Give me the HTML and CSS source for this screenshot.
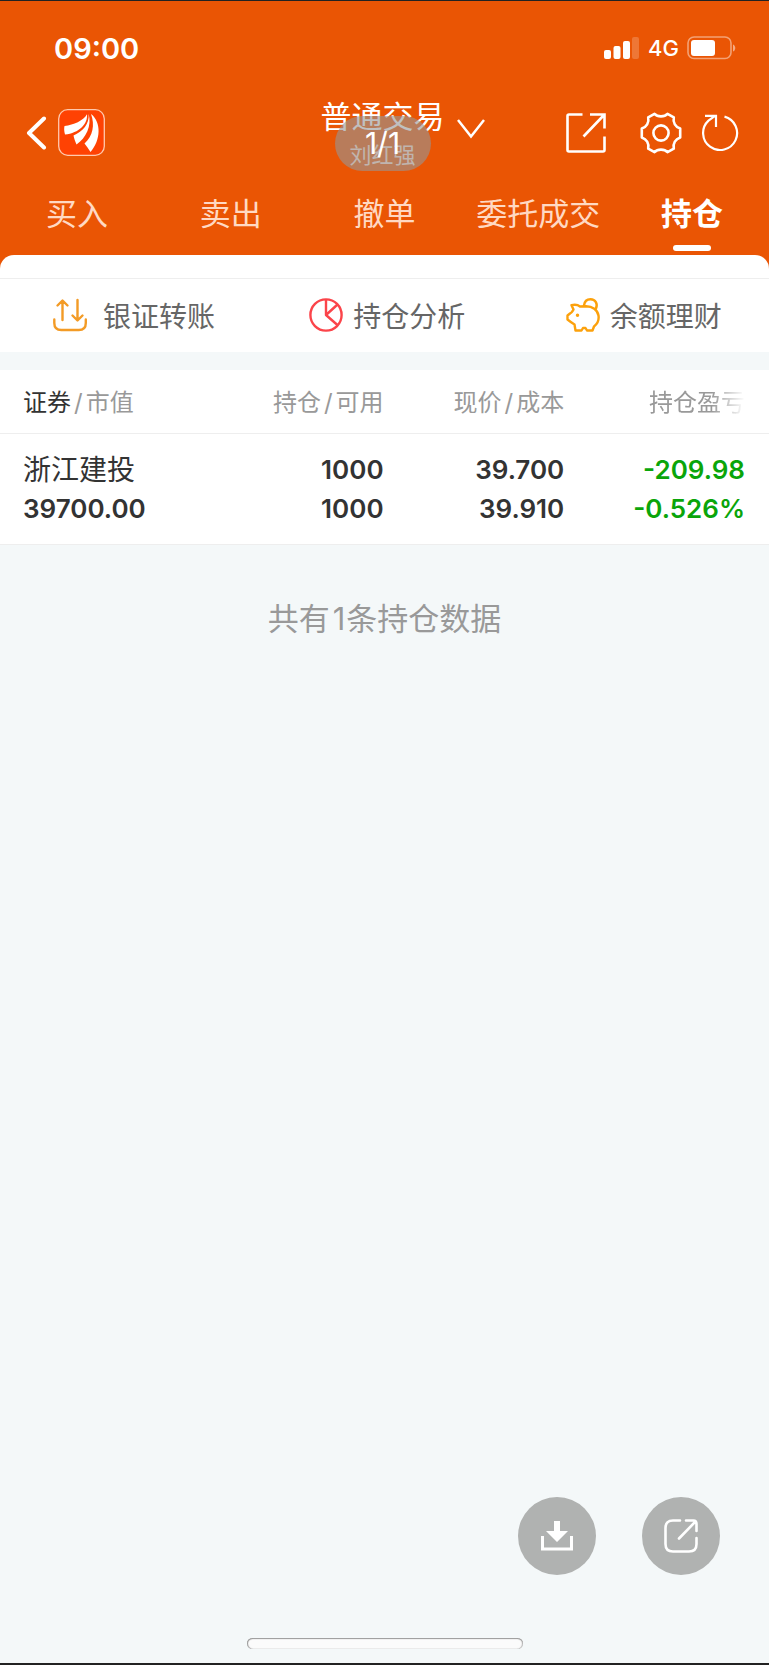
FILE: index.html
```html
<!DOCTYPE html>
<html lang="zh-CN">
<head>
  <meta charset="UTF-8" />
  <meta name="viewport" content="width=device-width, initial-scale=1.0" />
  <title>持仓</title>
  <link rel="stylesheet" href="styles.css">
</head>
<body>
  <header class="header">
    <div class="status">
      <span class="time">09:00</span>
      <div class="status-right">
        <svg width="36" height="22" viewBox="0 0 36 22" fill="#fff">
          <rect x="0" y="13" width="7" height="9" rx="2"/>
          <rect x="9.5" y="9" width="7" height="13" rx="2"/>
          <rect x="19" y="4" width="7" height="18" rx="2"/>
          <rect x="28" y="0" width="7" height="22" rx="2" opacity=".2"/>
        </svg>
        <span class="network">4G</span>
        <svg width="50" height="24" viewBox="0 0 50 24">
          <rect x="1" y="1" width="43" height="21.5" rx="6" fill="none" stroke="#fff" stroke-width="1.6" opacity=".45"/>
          <rect x="4" y="4" width="24" height="16" rx="3" fill="#fff"/>
          <path d="M46 8.5c3 1 3 6 0 7z" fill="#fff" opacity=".5"/>
        </svg>
      </div>
    </div>

    <nav class="nav">
      <div class="nav-left">
        <button class="icon-btn" aria-label="返回">
          <svg width="21" height="34" viewBox="0 0 21 34" fill="none" stroke="#fff" stroke-width="4" stroke-linecap="round" stroke-linejoin="round"><path d="M18 2.500 3 17l15 14.500"/></svg>
        </button>
        <a class="logo" href="#" aria-label="首页">
          <svg width="47" height="47" viewBox="0 0 47 47">
            <rect x=".7" y=".7" width="45.600" height="45.600" rx="9" fill="#ff4203" stroke="#ffc9ae" stroke-width="1.300"/>
            <g fill="#fff">
              <path d="M6.500 17C16 15.500 25 12 29 5.200 30 15 21 24 7 25.500 6 22 6 19 6.500 17z"/>
              <path d="M30.600 4.800C34 17 28 29 18.500 35.500 17 32 16 29 15.500 26.500 25 22.500 31.500 15 30.600 4.800z"/>
              <path d="M33 5C43.500 13 43 31 32.500 43 30.500 40 28.500 37 26.500 34.500 35 27 37 16 33 5z"/>
            </g>
          </svg>
        </a>
      </div>
      <div class="heading">
        <h1>普通交易</h1>
        <p>刘红强</p>
        <span class="toast">1/1</span>
      </div>
      <div class="nav-right">
        <button class="icon-btn switch" aria-label="切换账户">
          <svg width="28" height="20" viewBox="0 0 28 20" fill="none" stroke="#fff" stroke-width="2.500"><path d="M1 1l13 16.500L27 1"/></svg>
        </button>
        <div class="tools">
          <button class="icon-btn" aria-label="分享">
            <svg width="40" height="40" viewBox="0 0 40 40" fill="none" stroke="#fff" stroke-width="2.600">
              <path d="M16.500 1.500H3Q1.500 1.500 1.500 3v34Q1.500 38.500 3 38.500h34Q38.500 38.500 38.500 37V23.500M24 1.500h14.500V15.500M38 2 17.500 23.500"/>
            </svg>
          </button>
          <button class="icon-btn gear" aria-label="设置">
            <svg width="42" height="42" viewBox="0 0 42 42" fill="none" stroke="#fff" stroke-width="2.600" stroke-linejoin="round">
              <path d="M14.500 1.800C17.500 5.200 24.500 5.200 27.500 1.800L33.800 5.300C32.700 10.500 35.500 15 40.200 16.600L40.200 25.400C35.500 27 32.700 31.500 33.800 36.700L27.500 40.200C24.500 36.800 17.500 36.800 14.500 40.200L8.200 36.700C9.300 31.500 6.500 27 1.800 25.400L1.800 16.600C6.500 15 9.300 10.500 8.200 5.300Z"/>
              <circle cx="21" cy="21" r="7.600"/>
            </svg>
          </button>
          <button class="icon-btn" aria-label="刷新">
            <svg width="37" height="37" viewBox="0 0 37 37" fill="none" stroke="#fff" stroke-width="2.200">
              <path d="M22.500 2.600A17 17 0 1 1 6.500 6.600L13 1.800M3 1.800h11V13"/>
            </svg>
          </button>
        </div>
      </div>
    </nav>

    <div class="tabs">
      <a href="#">买入</a>
      <a href="#">卖出</a>
      <a href="#">撤单</a>
      <a href="#">委托成交</a>
      <a href="#" class="active">持仓</a>
    </div>
    <div class="sheet-top"></div>
  </header>

  <main>
    <div class="actions">
      <a href="#" class="transfer">
        <svg width="34" height="34" viewBox="0 0 34 34" fill="none" stroke="#f39b26" stroke-width="2.400" stroke-linecap="round" stroke-linejoin="round">
          <path d="M9.500 22V3M4.500 7.500l5-5 5 5M24.500 2v19M19.500 17.500l5 5 5-5M1.300 21.500V25q0 7 7 7h17.500q7 0 7-7v-3.500"/>
        </svg>
        银证转账
      </a>
      <a href="#">
        <svg width="34" height="34" viewBox="0 0 34 34" fill="none" stroke="#fb444a" stroke-width="2.400" stroke-linejoin="round">
          <circle cx="17" cy="17" r="15.600"/>
          <path d="M17 1.300V17l12 10.500M17 17 28.500 6.500"/>
        </svg>
        持仓分析
      </a>
      <a href="#">
        <svg width="34" height="34" viewBox="0 0 34 34" fill="none" stroke="#fca10c" stroke-width="2.400" stroke-linecap="round" stroke-linejoin="round">
          <path d="M14 8.500C11.500 6.500 8.500 6.500 5.500 7.200L7.500 11.500C6 14 5.500 15 4 15.500L1.500 17.500V21.500C4 23.500 6 25 8.500 26.500L9.500 32.500H15.500L17 30H19.500L21 32.500H26.500L28 28.500C32 25.500 33 21 32.500 17.500C31.500 12 26.500 8.300 20 8.300Z"/>
          <path d="M18 7.500C18.500 3.500 21 1.300 24.500 1.300 29.500 1.300 32 6 30 10.500"/>
          <circle cx="11.500" cy="17.200" r="1" fill="#fca10c" stroke-width="1.500"/>
        </svg>
        余额理财
      </a>
    </div>

    <table class="holdings">
      <thead>
        <tr>
          <th><b>证券</b><i>/</i>市值</th>
          <th>持仓<i>/</i>可用</th>
          <th>现价<i>/</i>成本</th>
          <th><span class="fade">持仓盈亏</span></th>
        </tr>
      </thead>
      <tbody>
        <tr>
          <td><span class="name">浙江建投</span><br>39700.00</td>
          <td>1000<br>1000</td>
          <td>39.700<br>39.910</td>
          <td class="down">-209.98<br>-0.526%</td>
        </tr>
      </tbody>
    </table>

    <p class="summary">共有<span>1</span>条持仓数据</p>
  </main>

  <footer>
    <div class="float-buttons">
      <button aria-label="下载">
        <svg width="34" height="30" viewBox="0 0 34 30" fill="#fff">
          <path d="M14 0h6v10h8L17 21 6 10h8zM1 15h3v11.500h26V15h3v14.500H1z"/>
        </svg>
      </button>
      <button aria-label="分享截图">
        <svg width="34" height="34" viewBox="0 0 34 34" fill="none" stroke="#fff" stroke-width="2.600" stroke-linecap="round" stroke-linejoin="round">
          <path d="M16 1.500H9Q1.500 1.500 1.500 9v16Q1.500 32.500 9 32.500h16Q32.500 32.500 32.500 25v-6M22 1.500h7.500Q32.500 1.500 32.500 5v7M31.500 2.500 15 19.500"/>
        </svg>
      </button>
    </div>
    <div class="home-bar"></div>
  </footer>
</body>
</html>
```
FILE: styles.css
```css
* {
  box-sizing: border-box;
}

body {
  margin: 0;
  min-height: 100vh;
  display: flex;
  flex-direction: column;
  font-family: Inter, "Noto Sans CJK SC", sans-serif;
  background: #f4f8f9;
  color: #333;
  border-top: 1px solid #222;
  border-bottom: 2px solid #222;
}

a {
  text-decoration: none;
}

svg {
  display: block;
  flex: none;
}

.header {
  background: #ea5504;
  color: #fff;
}

/* status bar */
.status {
  height: 89px;
  padding: 5px 32px 0 54px;
  display: flex;
  justify-content: space-between;
  align-items: center;
}

.time {
  font-size: 29px;
  font-weight: 600;
}

.status-right {
  display: flex;
  align-items: center;
  gap: 8px;
}

.network {
  font-size: 22px;
  font-weight: 500;
}

/* title row */
.nav {
  height: 84px;
  padding: 0 30px 0 26px;
  display: grid;
  grid-template-columns: 1fr auto 1fr;
  align-items: center;
}

.nav-left,
.nav-right,
.tools {
  display: flex;
  align-items: center;
}

.nav-left {
  gap: 11px;
}

.icon-btn {
  padding: 0;
  border: 0;
  background: none;
}

.heading {
  position: relative;
  padding-top: 7px;
  text-align: center;
}

.heading h1 {
  margin: 0;
  font-size: 31px;
  line-height: 39px;
  font-weight: 400;
}

.heading p {
  margin: 0;
  font-size: 22px;
  line-height: 39px;
  color: #ffe2d2;
}

.toast {
  position: absolute;
  top: 26px;
  left: 50%;
  width: 96px;
  margin-left: -48px;
  border-radius: 28px;
  background: rgba(150, 150, 150, 0.6);
  font-size: 30px;
  line-height: 55px;
}

.switch {
  margin: 0 0 8px 12px;
}

.tools {
  margin-left: auto;
}

.gear {
  margin: 0 20px 0 34px;
}

.tabs {
  height: 81px;
  padding-top: 4px;
  display: grid;
  grid-template-columns: repeat(5, 1fr);
}

.tabs a {
  color: #ffd9c3;
  font-size: 31px;
  line-height: 72px;
  text-align: center;
}

.tabs .active {
  position: relative;
  color: #fff;
  font-weight: 700;
}

.tabs .active::after {
  content: "";
  position: absolute;
  left: 50%;
  bottom: 4px;
  width: 38px;
  height: 6px;
  margin-left: -19px;
  border-radius: 3px;
  background: #fff;
}

.sheet-top {
  height: 24px;
  background: #fff;
  border-bottom: 1px solid #eee;
  border-radius: 14px 14px 0 0;
}

main {
  flex: 1;
}

/* shortcuts */
.actions {
  height: 73px;
  padding-bottom: 2px;
  margin-bottom: 18px;
  display: grid;
  grid-template-columns: repeat(3, 1fr);
  background: #fff;
}

.actions a {
  display: flex;
  align-items: center;
  gap: 10px;
  padding-left: 53px;
  color: #666;
  font-size: 28px;
}

.actions .transfer {
  gap: 16px;
}

/* holdings table */
.holdings {
  width: 100%;
  table-layout: fixed;
  border-collapse: collapse;
  background: #fff;
}

.holdings th,
.holdings td {
  width: 23.5%;
  padding: 0 24px 0 0;
  text-align: right;
}

.holdings th:first-child,
.holdings td:first-child {
  width: 29.5%;
  padding-left: 23px;
  text-align: left;
}

.holdings th {
  height: 63px;
  padding-bottom: 2px;
  border-bottom: 1px solid #eee;
  color: #999;
  font-size: 24px;
  font-weight: 400;
  white-space: nowrap;
}

.holdings th b {
  color: #333;
  font-weight: 400;
}

.holdings th i {
  font-style: normal;
  padding: 0 3px;
}

.holdings td {
  height: 111px;
  font-size: 26px;
  line-height: 39px;
  font-weight: 600;
  border-bottom: 1px solid #eee;
}

.holdings .name {
  display: inline-block;
  padding-top: 2px;
  font-size: 28px;
  line-height: 37px;
  font-weight: 400;
  vertical-align: top;
}

.holdings .down {
  color: #0aa50a;
}

.fade {
  -webkit-mask-image: linear-gradient(to right, #000 65%, transparent);
  mask-image: linear-gradient(to right, #000 65%, transparent);
}

.summary {
  margin: 52px 0;
  font-size: 31px;
  line-height: 44px;
  text-align: center;
  color: #999;
}

.summary span {
  padding: 0 1px 0 3px;
}

/* floating buttons and home indicator */
.float-buttons {
  display: flex;
  justify-content: flex-end;
  gap: 46px;
  padding-right: 49px;
}

.float-buttons button {
  width: 78px;
  height: 78px;
  display: flex;
  align-items: center;
  justify-content: center;
  padding: 0;
  border: 0;
  border-radius: 50%;
  background: #b0b2b1;
}

.home-bar {
  width: 276px;
  height: 11px;
  margin: 63px auto 14px;
  border-radius: 6px;
  background: #fbfbfb;
  box-shadow: inset 0 1px 1px #999, inset 1px 0 1px #999, inset -1px 0 1px #bbb;
}
```
